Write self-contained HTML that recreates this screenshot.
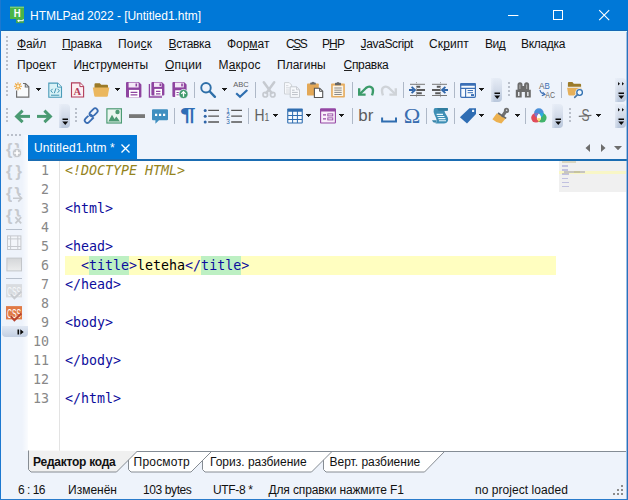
<!DOCTYPE html>
<html>
<head>
<meta charset="utf-8">
<title>HTMLPad 2022 - [Untitled1.htm]</title>
<style>
html,body{margin:0;padding:0;}
body{width:628px;height:500px;overflow:hidden;background:#eef3fb;font-family:"Liberation Sans",sans-serif;font-size:12px;color:#000;position:relative;}
.abs{position:absolute;}
svg{position:absolute;overflow:visible;}
#bl{position:absolute;left:0;top:0;width:1px;height:500px;background:#1c78d0;}
#br{position:absolute;left:627px;top:31px;width:1px;height:469px;background:#2b72bc;}
#br2{position:absolute;left:626px;top:32px;width:1px;height:467px;background:rgba(60,130,200,.45);}
#bb{position:absolute;left:0;top:499px;width:628px;height:1px;background:#2a7bcb;}
#title{position:absolute;left:0;top:0;width:628px;height:31px;background:#0078d7;}
#title .edge{position:absolute;left:0;top:30px;width:628px;height:1px;background:#1668b4;}
#hl{position:absolute;left:1px;top:31px;width:626px;height:1px;background:#e4fbff;}
#title .t{position:absolute;left:30px;top:9px;letter-spacing:-0.035px;color:#fff;font-size:12px;line-height:15px;white-space:nowrap;}
.mi{position:absolute;white-space:nowrap;line-height:15px;height:15px;font-size:12px;color:#111;}
.mi u{text-decoration:none;position:relative;}
.mi u::after{content:'';position:absolute;left:0;right:0;top:12px;height:1px;background:#222;}
.grip{position:absolute;width:2px;}
.grip i{display:block;width:2px;height:2px;background:#b9bfca;margin-bottom:2px;}
.hgrip{position:absolute;height:2px;white-space:nowrap;font-size:0;}
.hgrip i{display:inline-block;width:2px;height:2px;background:#b9bfca;margin-right:2px;}
.sep{position:absolute;width:1px;height:16px;background:#aeb8c7;}
.ovf{position:absolute;width:11px;height:24px;background:linear-gradient(90deg,rgba(238,243,251,.55),rgba(238,243,251,0) 30%),linear-gradient(#e6ecf6,#d4dcea 45%,#b9c7dc);border-radius:0 4px 4px 0;}
#tabline{position:absolute;left:28px;top:159px;width:599px;height:2px;background:#1a6cb2;}
#tab{position:absolute;left:28px;top:135px;width:109px;height:26px;background:#0078d7;color:#fff;}
#tab .t{position:absolute;left:6px;top:6px;letter-spacing:0.14px;font-size:12px;line-height:15px;white-space:nowrap;color:#fff;}
#editor{position:absolute;left:28px;top:161px;width:598px;height:290px;background:#fff;overflow:hidden;}
#gl{position:absolute;left:31px;top:0;width:1px;height:290px;background:#e3e3e3;}
.code{font-family:"DejaVu Sans Mono","Liberation Mono",monospace;font-size:13.3px;line-height:19px;white-space:pre;height:19px;}
.ln{position:absolute;left:0;width:21px;text-align:right;color:#888;}
.cl{position:absolute;left:37px;color:#000;}
.tg{color:#0c0c9c;}
.dt{color:#94831c;font-style:italic;}
#cur{position:absolute;left:37px;top:95px;width:491px;height:19px;background:#fffec0;}
.gh{position:absolute;top:95px;width:40px;height:19px;background:#bdf0c3;}
#mm{position:absolute;left:531px;top:0;width:67px;height:31px;background:#f0f0f0;}
#mm i{position:absolute;height:1.6px;display:block;opacity:.26;}
.st{position:absolute;top:483px;line-height:15px;font-size:12px;white-space:nowrap;color:#111;}
.bt{position:absolute;top:455px;line-height:15px;font-size:12px;white-space:nowrap;color:#111;}

</style>
</head>
<body>
<div id="title">
<svg style="left:9px;top:7px" width="16" height="17" viewBox="0 0 16 17"><path d="M1 -0.3H15V16.1H7V12H1Z" fill="#4ab548"/><path d="M1 -0.3H15V0.8H1Z" fill="#86d481"/><path d="M7 12H15V16.1H7Z" fill="#3fa654"/><text x="4.7" y="9.9" font-family="Liberation Sans, sans-serif" font-weight="bold" font-size="11" fill="#fff" textLength="6.9" lengthAdjust="spacingAndGlyphs">H</text><path d="M9.2 13.7H14.2V12.2" stroke="#fff" stroke-width="1" fill="none"/><path d="M8 13.7L10.2 12.2V15.2Z" fill="#fff"/></svg>
<div class="t">HTMLPad 2022 - [Untitled1.htm]</div>
<svg style="left:500px;top:0" width="128" height="31" viewBox="0 0 128 31"><path d="M8 15.5h10.4" stroke="#fff" stroke-width="1"/><rect x="53.5" y="10.5" width="9" height="9" fill="none" stroke="#fff" stroke-width="1"/><path d="M99.2 10.1l10 10M109.2 10.1l-10 10" stroke="#fff" stroke-width="1.1"/></svg>
<div class="edge"></div>
</div>
<div id="hl"></div>
<div class="grip" style="left:6px;top:36px"><i></i><i></i><i></i><i></i><i></i><i></i><i></i><i></i><i></i></div>
<div class="mi" style="left:17px;top:37px;letter-spacing:-0.1px"><u>Ф</u>айл</div>
<div class="mi" style="left:62px;top:37px;letter-spacing:-0.1px"><u>П</u>равка</div>
<div class="mi" style="left:118px;top:37px;letter-spacing:0.2px">Пои<u>с</u>к</div>
<div class="mi" style="left:168.5px;top:37px;letter-spacing:-0.37px"><u>В</u>ставка</div>
<div class="mi" style="left:227px;top:37px;letter-spacing:-0.05px">Фор<u>м</u>ат</div>
<div class="mi" style="left:286px;top:37px;letter-spacing:-1.5px">C<u>S</u>S</div>
<div class="mi" style="left:322px;top:37px;letter-spacing:-0.9px">P<u>H</u>P</div>
<div class="mi" style="left:360.5px;top:37px;letter-spacing:-0.35px"><u>J</u>avaScript</div>
<div class="mi" style="left:429px;top:37px;letter-spacing:0.1px">Ск<u>р</u>ипт</div>
<div class="mi" style="left:485px;top:37px;letter-spacing:-0.5px">Ви<u>д</u></div>
<div class="mi" style="left:521px;top:37px;letter-spacing:-0.3px">Вкладка</div>
<div class="mi" style="left:17px;top:58px;letter-spacing:0px">Про<u>е</u>кт</div>
<div class="mi" style="left:73.5px;top:58px;letter-spacing:-0.03px">И<u>н</u>струменты</div>
<div class="mi" style="left:165px;top:58px;letter-spacing:0.15px"><u>О</u>пции</div>
<div class="mi" style="left:218.5px;top:58px;letter-spacing:0.1px">М<u>а</u>крос</div>
<div class="mi" style="left:277px;top:58px;letter-spacing:0px">Плагины</div>
<div class="mi" style="left:343.5px;top:58px;letter-spacing:-0.3px"><u>С</u>правка</div>
<div class="grip" style="left:6px;top:82px"><i></i><i></i><i></i><i></i></div>
<svg style="left:14px;top:82px" width="16" height="16" viewBox="0 0 16 16"><path d="M2.6 8.5V15.2H14.8V4.8L11.5 1.5H9" fill="#f9fbfd" stroke="#6f6f6f" stroke-width="1.2"/><path d="M11.3 1.6V5H14.7" fill="none" stroke="#6f6f6f" stroke-width="1.1"/><path d="M4 0.3V8.3M0 4.3H8M1.2 1.5L6.8 7.1M6.8 1.5L1.2 7.1" stroke="#f0a63a" stroke-width="1.1" fill="none"/><circle cx="4" cy="4.3" r="1.2" fill="#fff3d0"/></svg>
<svg style="left:36px;top:88px" width="5" height="3" viewBox="0 0 5 3" shape-rendering="crispEdges"><path d="M0 0h5v1h-1v1h-1v1h-1v-1h-1v-1h-1z" fill="#1b1b1b"/></svg>
<svg style="left:47px;top:82px" width="16" height="16" viewBox="0 0 16 16"><path d="M1.8 1.1H10.6L14.5 5V15.2H1.8Z" fill="#d9f2f7" stroke="#4a9bb8" stroke-width="1.1"/><path d="M10.5 1.2V5.1H14.4" fill="#f4fcfe" stroke="#4a9bb8" stroke-width="1"/><path d="M5.6 6.8L3.8 8.8L5.6 10.8M10.6 6.8L12.4 8.8L10.6 10.8M9 6.3L7.3 11.2M4 13.2H12.3" fill="none" stroke="#3f93b0" stroke-width="1"/></svg>
<svg style="left:70px;top:82px" width="16" height="16" viewBox="0 0 16 16"><path d="M1.5 0.9H10L13.6 4.5V15H1.5Z" fill="#fbeff2" stroke="#b23c5a" stroke-width="1.1"/><path d="M9.9 1V4.6H13.5" fill="#fff" stroke="#b23c5a" stroke-width="1"/><text x="7.3" y="13.2" text-anchor="middle" font-family="Liberation Serif, serif" font-size="10.5" font-weight="bold" fill="#b23c5a">A</text></svg>
<svg style="left:93px;top:82px" width="16" height="16" viewBox="0 0 16 16"><path d="M1.5 2.2Q1.5 1.2 2.5 1.2H6.8L8.2 2.7H14Q15 2.7 15 3.7V6H1.5Z" fill="#9b7a28"/><path d="M-0.2 5.5H16.3L14.8 14Q14.6 14.8 13.8 14.8H2.3Q1.5 14.8 1.3 14Z" fill="#ebb75e"/></svg>
<svg style="left:115px;top:88px" width="5" height="3" viewBox="0 0 5 3" shape-rendering="crispEdges"><path d="M0 0h5v1h-1v1h-1v1h-1v-1h-1v-1h-1z" fill="#1b1b1b"/></svg>
<svg style="left:126px;top:82px" width="16" height="16" viewBox="0 0 16 16"><path d="M0 1Q0 0 1 0H12.8L15.4 2.6V14.4Q15.4 15.4 14.4 15.4H1Q0 15.4 0 14.4Z" fill="#8e44a0"/><rect x="2.6" y="0.6" width="10.0" height="4.9" fill="#f4e8f7"/><rect x="9.5" y="1.5" width="1.6" height="2.9" fill="#8e44a0"/><rect x="3" y="7.9" width="10.0" height="7.5" fill="#fff"/><path d="M4.6 10.4H11.4M4.6 12.9H11.4" stroke="#8e44a0" stroke-width="1.1"/></svg>
<svg style="left:149px;top:82px" width="16" height="16" viewBox="0 0 16 16"><path d="M2.4 1Q2.4 0 3.4 0H12.8L15.4 2.6V12.5Q15.4 13.5 14.4 13.5H3.4Q2.4 13.5 2.4 12.5Z" fill="#8e44a0"/><rect x="5.0" y="0.6" width="7.6" height="4.3" fill="#f4e8f7"/><rect x="10.5" y="1.5" width="1.6" height="2.6" fill="#8e44a0"/><rect x="5.4" y="6.9" width="7.6" height="6.6" fill="#fff"/><path d="M7.0 9.4H11.4M7.0 11.9H11.4" stroke="#8e44a0" stroke-width="1.1"/><path d="M0.4 2V15H13" fill="none" stroke="#8e44a0" stroke-width="1.3"/></svg>
<svg style="left:172px;top:82px" width="16" height="16" viewBox="0 0 16 16"><path d="M0.4 1Q0.4 0 1.4 0H12.0L14.6 2.6V14Q14.6 15 13.6 15H1.4Q0.4 15 0.4 14Z" fill="#8e44a0"/><rect x="3.0" y="0.6" width="8.8" height="4.8" fill="#f4e8f7"/><rect x="9.2" y="1.5" width="1.6" height="2.9" fill="#8e44a0"/><rect x="3.2" y="8.3" width="5" height="6.7" fill="#fff"/><path d="M4.5 10.5H7M4.5 12.8H7" stroke="#8e44a0" stroke-width="1"/><circle cx="11.5" cy="12" r="4.6" fill="#3f9a6c" stroke="#eef3fb" stroke-width="0.8"/><path d="M11.5 14.8V9.8M9.3 11.9L11.5 9.6L13.7 11.9" fill="none" stroke="#fff" stroke-width="1.3"/></svg>
<div class="sep" style="left:194px;top:82px"></div>
<svg style="left:200px;top:82px" width="16" height="16" viewBox="0 0 16 16"><circle cx="6" cy="5.7" r="4.75" fill="none" stroke="#2f6fa8" stroke-width="1.9"/><path d="M9.8 9.5L14.9 14.8" stroke="#2f6fa8" stroke-width="2.4" stroke-linecap="round"/></svg>
<svg style="left:222px;top:88px" width="5" height="3" viewBox="0 0 5 3" shape-rendering="crispEdges"><path d="M0 0h5v1h-1v1h-1v1h-1v-1h-1v-1h-1z" fill="#1b1b1b"/></svg>
<svg style="left:233px;top:82px" width="16" height="16" viewBox="0 0 16 16"><text x="0.2" y="5.3" font-family="Liberation Sans, sans-serif" font-size="7.3" fill="#5f5f5f" textLength="15.6" lengthAdjust="spacingAndGlyphs">ABC</text><path d="M3.2 11.2L7 14.8L14.3 8" fill="none" stroke="#2f6fb0" stroke-width="2.2"/></svg>
<div class="sep" style="left:255px;top:82px"></div>
<svg style="left:262px;top:82px" width="16" height="16" viewBox="0 0 16 16"><path d="M1.8 0.3L9.6 11M12.2 0.3L4.4 11" stroke="#c6cad0" stroke-width="2.5" fill="none" stroke-linecap="round"/><circle cx="3.3" cy="12.7" r="2.3" fill="none" stroke="#c6cad0" stroke-width="1.7"/><circle cx="10.7" cy="12.7" r="2.3" fill="none" stroke="#c6cad0" stroke-width="1.7"/></svg>
<svg style="left:284px;top:82px" width="16" height="16" viewBox="0 0 16 16"><path d="M0.5 0.6H5.2L7.6 3V12H0.5Z" fill="#f7f9fc" stroke="#cdd1d6" stroke-width="1"/><path d="M2 3.6H4.4M2 5.8H5.6M2 8H5.6M2 10H5.6" stroke="#d2d5da" stroke-width="0.9"/><path d="M6.2 4.8H12.6L15.5 7.7V15.4H6.2Z" fill="#f7f9fc" stroke="#c6cad0" stroke-width="1"/><path d="M12.5 4.9V7.8H15.4" fill="none" stroke="#c6cad0" stroke-width="0.9"/><path d="M8 8.2H10.6M8 10.4H13.8M8 12.6H13.8" stroke="#bcc1c8" stroke-width="1"/></svg>
<svg style="left:307px;top:82px" width="16" height="16" viewBox="0 0 16 16"><rect x="0" y="1.4" width="11.8" height="12.2" rx="0.8" fill="#e3a857"/><path d="M3.2 2.6V1.2Q3.2 0.6 4 0.6H4.8Q5.2 -0.2 6 -0.2Q6.8 -0.2 7.2 0.6H8Q8.8 0.6 8.8 1.2V2.6Z" fill="#6a6a6a"/><path d="M7.4 6.2H12.7L15.7 9.2V15.5H7.4Z" fill="#fff" stroke="#555" stroke-width="1.1"/><path d="M12.6 6.3V9.3H15.6" fill="none" stroke="#555" stroke-width="1"/></svg>
<svg style="left:330px;top:82px" width="16" height="16" viewBox="0 0 16 16"><rect x="1.1" y="1.5" width="13.8" height="14" rx="0.8" fill="#e6ae62"/><rect x="2.8" y="3.6" width="10.4" height="10.4" fill="#fcf4e6"/><path d="M5 3.2V1.4Q5 0.8 5.8 0.8H6.8Q7.2 0 8 0Q8.8 0 9.2 0.8H10.2Q11 0.8 11 1.4V3.2Z" fill="#666"/><path d="M4.3 6H11.7M4.3 8.2H11.7M4.3 10.4H11.7M4.3 12.5H11.7" stroke="#8a8a8a" stroke-width="1"/></svg>
<div class="sep" style="left:352px;top:82px"></div>
<svg style="left:358px;top:82px" width="16" height="16" viewBox="0 0 16 16"><path d="M1.2 6.2V12.6H7.6" fill="none" stroke="#3c9b6a" stroke-width="2.4"/><path d="M1.8 12L8 6C10.6 3.6 15 4.4 15 8.4C15 10.2 14.6 11.8 14 13.4" fill="none" stroke="#3c9b6a" stroke-width="2.4"/></svg>
<svg style="left:381px;top:82px" width="16" height="16" viewBox="0 0 16 16"><g transform="translate(16 0) scale(-1 1)"><path d="M1.2 6.2V12.6H7.6" fill="none" stroke="#cfd3d8" stroke-width="2.4"/><path d="M1.8 12L8 6C10.6 3.6 15 4.4 15 8.4C15 10.2 14.6 11.8 14 13.4" fill="none" stroke="#cfd3d8" stroke-width="2.4"/></g></svg>
<div class="sep" style="left:403px;top:82px"></div>
<svg style="left:409px;top:82px" width="16" height="16" viewBox="0 0 16 16"><path d="M7.5 0V15.5" stroke="#9a9a9a" stroke-width="0.8" stroke-dasharray="1.2 0.8"/><path d="M1 2.3H16M1 13.5H16" stroke="#777" stroke-width="1"/><path d="M7.6 4.8H11.2M7.6 8H16M7.6 11.2H12.8" stroke="#5a5a5a" stroke-width="2"/><path d="M0 8H4.5" stroke="#2f65a8" stroke-width="2"/><path d="M2.6 4.8L6 8L2.6 11.2" fill="none" stroke="#2f65a8" stroke-width="1.8"/></svg>
<svg style="left:432px;top:82px" width="16" height="16" viewBox="0 0 16 16"><path d="M8.5 0V15.5" stroke="#9a9a9a" stroke-width="0.8" stroke-dasharray="1.2 0.8"/><path d="M0 2.3H15M0 13.5H15" stroke="#777" stroke-width="1"/><path d="M4.8 4.8H8.4M0 8H8.4M3.2 11.2H8.4" stroke="#5a5a5a" stroke-width="2"/><path d="M11.5 8H16" stroke="#2f65a8" stroke-width="2"/><path d="M13.4 4.8L10 8L13.4 11.2" fill="none" stroke="#2f65a8" stroke-width="1.8"/></svg>
<div class="sep" style="left:454px;top:82px"></div>
<svg style="left:460px;top:82px" width="16" height="16" viewBox="0 0 16 16"><rect x="0.7" y="1.6" width="14.7" height="13.7" rx="1" fill="#f6fafe" stroke="#3b6fb5" stroke-width="1.2"/><path d="M0.1 2.4Q0.1 1 1.5 1H14.6Q16 1 16 2.4V3.7H0.1Z" fill="#3b6fb5"/><path d="M0.8 6.4H15.3M5.6 6.4V15" stroke="#3b6fb5" stroke-width="1.1"/><path d="M7.6 8.5H13M7.6 10.7H13" stroke="#3b6fb5" stroke-width="1"/><rect x="11" y="12.1" width="3" height="2" fill="#3b6fb5"/></svg>
<svg style="left:479px;top:88px" width="5" height="3" viewBox="0 0 5 3" shape-rendering="crispEdges"><path d="M0 0h5v1h-1v1h-1v1h-1v-1h-1v-1h-1z" fill="#1b1b1b"/></svg>
<div class="ovf" style="left:491.4px;top:78px"><svg style="left:0;top:0" width="11" height="24" viewBox="0 0 11 24"><path d="M3.5 14.5h5.5v1.5h-5.5zM3.3 17.5h5.9l-2.95 3.6z" fill="#0a0a0a"/></svg></div>
<div class="grip" style="left:508px;top:82px"><i></i><i></i><i></i><i></i></div>
<svg style="left:515px;top:82px" width="16" height="16" viewBox="0 0 16 16"><path d="M2.5 8V2.8Q2.5 0.3 5 0.3Q7.5 0.3 7.5 2.8V8Z M9.1 8V2.8Q9.1 0.3 11.6 0.3Q14.1 0.3 14.1 2.8V8Z" fill="#6b6b6b"/><path d="M0.8 7.7H6.7V15.6H0.8ZM9.9 7.7H15.8V15.6H9.9ZM6.5 4H10.1V10H6.5Z" fill="#6b6b6b"/><path d="M3 10H4.5V14H3ZM12.1 10H13.6V14H12.1Z" fill="#e4e6ea"/><path d="M4.4 2.6H5.4V7H4.4ZM11.2 2.6H12.2V7H11.2Z" fill="#b4b4b4"/></svg>
<svg style="left:539px;top:82px" width="16" height="16" viewBox="0 0 16 16"><text x="0" y="6.6" font-family="Liberation Sans, sans-serif" font-size="8.6" fill="#666" textLength="5.6" lengthAdjust="spacingAndGlyphs">A</text><text x="5.4" y="6.6" font-family="Liberation Sans, sans-serif" font-size="8.6" fill="#3a6db3" textLength="5.3" lengthAdjust="spacingAndGlyphs">B</text><text x="6.2" y="15.6" font-family="Liberation Sans, sans-serif" font-size="8.8" fill="#666" textLength="9.8" lengthAdjust="spacingAndGlyphs">AC</text><path d="M1 8Q1.4 11 5.3 12.4" fill="none" stroke="#3a6db3" stroke-width="1.2"/><path d="M3.6 10L6 12.6L2.8 13.8" fill="none" stroke="#3a6db3" stroke-width="1.1"/></svg>
<div class="sep" style="left:561px;top:82px"></div>
<svg style="left:567px;top:82px" width="16" height="16" viewBox="0 0 16 16"><path d="M0.9 1Q0.9 0 1.9 0H5.4L6.8 1.7H13.1Q14.1 1.7 14.1 2.7V4.7H0.9Z" fill="#9b7a28"/><path d="M0.1 5.7H14.5L13.2 12.8Q13 13.6 12.2 13.6H2.3Q1.5 13.6 1.3 12.8Z" fill="#e6b05a"/><circle cx="12.6" cy="10.5" r="4.3" fill="#eef3fb"/><path d="M10.6 12.4L7.2 15.8" stroke="#eef3fb" stroke-width="3.2" stroke-linecap="round"/><circle cx="12.6" cy="10.5" r="2.8" fill="#f4faff" stroke="#2f6fb0" stroke-width="1.3"/><path d="M10.5 12.6L7.7 15.4" stroke="#4a78a8" stroke-width="1.6" stroke-linecap="round"/></svg>
<div class="ovf" style="left:615px;top:78px"><svg style="left:0;top:0" width="11" height="24" viewBox="0 0 11 24"><path d="M3 4l2 1.75l-2 1.75zM7 4l2 1.75l-2 1.75z" fill="#111"/><path d="M3.5 14.5h5.5v1.5h-5.5zM3.3 17.5h5.9l-2.95 3.6z" fill="#0a0a0a"/></svg></div>
<div class="grip" style="left:6px;top:108px"><i></i><i></i><i></i><i></i></div>
<svg style="left:14px;top:108px" width="16" height="16" viewBox="0 0 16 16"><path d="M2.6 8.4H16" stroke="#4a9a72" stroke-width="3"/><path d="M8.6 2.6L2.6 8.4L8.6 14.2" fill="none" stroke="#4a9a72" stroke-width="3"/></svg>
<svg style="left:37px;top:108px" width="16" height="16" viewBox="0 0 16 16"><path d="M0 8.4H13.4" stroke="#4a9a72" stroke-width="3"/><path d="M7.4 2.6L13.4 8.4L7.4 14.2" fill="none" stroke="#4a9a72" stroke-width="3"/></svg>
<div class="ovf" style="left:58.7px;top:104px"><svg style="left:0;top:0" width="11" height="24" viewBox="0 0 11 24"><path d="M3.5 14.5h5.5v1.5h-5.5zM3.3 17.5h5.9l-2.95 3.6z" fill="#0a0a0a"/></svg></div>
<div class="grip" style="left:75px;top:108px"><i></i><i></i><i></i><i></i></div>
<svg style="left:83px;top:108px" width="16" height="16" viewBox="0 0 16 16"><g transform="translate(8.2 7.6) rotate(-45)" fill="none" stroke="#3a6db3" stroke-width="1.8"><rect x="-8.7" y="-1.9" width="9.3" height="5" rx="2.5"/><path d="M-2.4 -3.1H1.2" stroke="#eef3fb" stroke-width="2.8"/><rect x="-0.6" y="-3.1" width="9.3" height="5" rx="2.5"/><path d="M-1.3 3.1H1.8" stroke="#eef3fb" stroke-width="1.2"/><path d="M-1.8 3.1H0.5" stroke="#3a6db3" stroke-width="1.8"/></g></svg>
<svg style="left:106px;top:108px" width="16" height="16" viewBox="0 0 16 16"><rect x="0.9" y="0.8" width="14.5" height="14.2" fill="#eaf6f0" stroke="#4c9a73" stroke-width="1.2"/><circle cx="11.5" cy="4" r="2.2" fill="#4c9a73"/><path d="M2.3 13.5L6 6.8L8.5 11L10.3 8.6L14 13.5Z" fill="#4c9a73"/></svg>
<svg style="left:129px;top:108px" width="16" height="16" viewBox="0 0 16 16"><rect x="0" y="6.2" width="16" height="3.8" fill="#777"/></svg>
<svg style="left:152px;top:108px" width="16" height="16" viewBox="0 0 16 16"><path d="M1 1.2H15Q16 1.2 16 2.2V11.2Q16 12.2 15 12.2H7L3.4 15.8V12.2H1Q0 12.2 0 11.2V2.2Q0 1.2 1 1.2Z" fill="#3f8fc0"/><path d="M3 5.8H5.2V8H3ZM7 5.8H9.2V8H7ZM11 5.8H13.2V8H11Z" fill="#fff"/></svg>
<div class="sep" style="left:174px;top:108px"></div>
<svg style="left:180px;top:108px" width="16" height="16" viewBox="0 0 16 16"><text x="-0.1" y="13.1" font-family="Liberation Sans, sans-serif" font-size="18" font-weight="bold" fill="#2f6db5" textLength="15.8" lengthAdjust="spacingAndGlyphs">¶</text></svg>
<svg style="left:203px;top:108px" width="16" height="16" viewBox="0 0 16 16"><circle cx="2.2" cy="2.4" r="1.5" fill="#2f65a8"/><circle cx="2.2" cy="8.2" r="1.5" fill="#2f65a8"/><circle cx="2.2" cy="14" r="1.5" fill="#2f65a8"/><path d="M5.2 2.4H16M5.2 8.2H16M5.2 14H16" stroke="#555" stroke-width="1.3"/></svg>
<svg style="left:226px;top:108px" width="16" height="16" viewBox="0 0 16 16"><text x="0.3" y="4.6" font-family="Liberation Sans, sans-serif" font-size="6.4" fill="#2f65a8">1</text><text x="0.3" y="10.4" font-family="Liberation Sans, sans-serif" font-size="6.4" fill="#2f65a8">2</text><text x="0.3" y="16.2" font-family="Liberation Sans, sans-serif" font-size="6.4" fill="#2f65a8">3</text><path d="M5.2 2.4H16M5.2 8.2H16M5.2 14H16" stroke="#555" stroke-width="1.3"/></svg>
<div class="sep" style="left:248px;top:108px"></div>
<svg style="left:254px;top:108px" width="16" height="16" viewBox="0 0 16 16"><text x="0.4" y="13.2" font-family="Liberation Sans, sans-serif" font-size="16" fill="#5f5f5f" textLength="10" lengthAdjust="spacingAndGlyphs">H</text><text x="10.6" y="13.3" font-family="Liberation Sans, sans-serif" font-size="10.4" fill="#5f5f5f" textLength="4.8" lengthAdjust="spacingAndGlyphs">1</text></svg>
<svg style="left:273px;top:114px" width="5" height="3" viewBox="0 0 5 3" shape-rendering="crispEdges"><path d="M0 0h5v1h-1v1h-1v1h-1v-1h-1v-1h-1z" fill="#1b1b1b"/></svg>
<svg style="left:287px;top:108px" width="16" height="16" viewBox="0 0 16 16"><rect x="0.2" y="0.4" width="15.6" height="15" rx="0.8" fill="#2f6db0"/><path d="M1.3 3.8H5.1V7H1.3ZM6.1 3.8H9.9V7H6.1ZM10.9 3.8H14.7V7H10.9ZM1.3 8H5.1V11H1.3ZM6.1 8H9.9V11H6.1ZM10.9 8H14.7V11H10.9ZM1.3 12H5.1V14.4H1.3ZM6.1 12H9.9V14.4H6.1ZM10.9 12H14.7V14.4H10.9Z" fill="#f6fafe"/></svg>
<svg style="left:306px;top:114px" width="5" height="3" viewBox="0 0 5 3" shape-rendering="crispEdges"><path d="M0 0h5v1h-1v1h-1v1h-1v-1h-1v-1h-1z" fill="#1b1b1b"/></svg>
<svg style="left:320px;top:108px" width="16" height="16" viewBox="0 0 16 16"><rect x="0.6" y="1" width="14.8" height="14" rx="0.6" fill="#f9effb" stroke="#9447a4" stroke-width="1.1"/><path d="M0 1.4Q0 0.4 1 0.4H15Q16 0.4 16 1.4V3.6H0Z" fill="#9447a4"/><path d="M3 6.9H6M3 10.9H6" stroke="#9447a4" stroke-width="1.1"/><rect x="7.8" y="5.9" width="5" height="2" fill="#fff" stroke="#9447a4" stroke-width="0.9"/><rect x="7.8" y="9.9" width="5" height="2" fill="#fff" stroke="#9447a4" stroke-width="0.9"/></svg>
<svg style="left:339px;top:114px" width="5" height="3" viewBox="0 0 5 3" shape-rendering="crispEdges"><path d="M0 0h5v1h-1v1h-1v1h-1v-1h-1v-1h-1z" fill="#1b1b1b"/></svg>
<div class="sep" style="left:352px;top:108px"></div>
<svg style="left:358px;top:108px" width="16" height="16" viewBox="0 0 16 16"><text x="0.3" y="13.1" font-family="Liberation Sans, sans-serif" font-size="17" fill="#5c5c5c" textLength="15" lengthAdjust="spacingAndGlyphs">br</text></svg>
<svg style="left:381px;top:108px" width="16" height="16" viewBox="0 0 16 16"><path d="M1.1 9.4V13.4H15V9.4" fill="none" stroke="#2f6db0" stroke-width="2"/></svg>
<svg style="left:404px;top:108px" width="16" height="16" viewBox="0 0 16 16"><text x="-0.3" y="15" font-family="Liberation Serif, serif" font-size="22" fill="#3a6eb0" textLength="16.6" lengthAdjust="spacingAndGlyphs">Ω</text></svg>
<div class="sep" style="left:426px;top:108px"></div>
<svg style="left:432px;top:108px" width="16" height="16" viewBox="0 0 16 16"><path d="M1.8 1.2Q2.2 0.1 3.6 0.1H15Q16 0.1 16 1.4Q16 2.7 15 2.7H12.4Q12.8 5 14.8 7.8Q17 11 15.6 13.6Q14.6 15.6 12 15.6H3.4Q5.2 14.6 4.6 12Q4 9.6 2.6 7Q1 4 1.8 1.2Z" fill="#3f8fb5"/><path d="M5.2 0.1H15Q16 0.1 16 1.4Q16 2.7 15 2.7H6.6Q5.4 1.6 5.2 0.1Z" fill="#317d9f"/><path d="M0 12.2H4.5Q4.9 14.6 3.6 14.7Q0.8 14.8 0 12.2Z" fill="#3a86aa"/><path d="M4.6 6.4H11M5.4 8.5H12.4M6.4 10.6H13.4M7 12.7H14" stroke="#e8f8fd" stroke-width="1.1"/></svg>
<div class="sep" style="left:454px;top:108px"></div>
<svg style="left:460px;top:108px" width="16" height="16" viewBox="0 0 16 16"><path d="M-0.1 9.3L9.4 0.3H16V6L7 15.6Z" fill="#2f6db3"/><rect x="12" y="1.8" width="2.2" height="2.2" rx="0.6" fill="#f3f8fd"/></svg>
<svg style="left:479px;top:114px" width="5" height="3" viewBox="0 0 5 3" shape-rendering="crispEdges"><path d="M0 0h5v1h-1v1h-1v1h-1v-1h-1v-1h-1z" fill="#1b1b1b"/></svg>
<svg style="left:493px;top:108px" width="16" height="16" viewBox="0 0 16 16"><path d="M3.8 5.2L12.8 10.2L8.4 15.6Q3.4 15 -0.6 11.2Z" fill="#ecb150"/><path d="M13 3L9.8 7.6" stroke="#707070" stroke-width="3.2" stroke-linecap="round"/><circle cx="13.5" cy="2.4" r="2.6" fill="#707070"/><circle cx="13.6" cy="2.2" r="0.75" fill="#dfe2e7"/><path d="M5 5L13.2 10.3" stroke="#666" stroke-width="1.6"/></svg>
<svg style="left:515px;top:114px" width="5" height="3" viewBox="0 0 5 3" shape-rendering="crispEdges"><path d="M0 0h5v1h-1v1h-1v1h-1v-1h-1v-1h-1z" fill="#1b1b1b"/></svg>
<div class="sep" style="left:525px;top:108px"></div>
<svg style="left:531px;top:108px" width="16" height="16" viewBox="0 0 16 16"><defs><clipPath id="cb"><circle cx="7.9" cy="5.1" r="4.8"/></clipPath><clipPath id="cr"><circle cx="5" cy="9.8" r="4.8"/></clipPath><clipPath id="cg"><circle cx="10.8" cy="9.8" r="4.8"/></clipPath></defs><circle cx="7.9" cy="5.1" r="4.8" fill="#4a8fd8"/><circle cx="5" cy="9.8" r="4.8" fill="#e14b5a"/><circle cx="10.8" cy="9.8" r="4.8" fill="#41b36b"/><circle cx="5" cy="9.8" r="4.8" fill="#7a78cf" clip-path="url(#cb)"/><circle cx="10.8" cy="9.8" r="4.8" fill="#2baee0" clip-path="url(#cb)"/><circle cx="10.8" cy="9.8" r="4.8" fill="#f7b648" clip-path="url(#cr)"/><g clip-path="url(#cb)"><g clip-path="url(#cr)"><circle cx="10.8" cy="9.8" r="4.8" fill="#fffdf2"/></g></g><path d="M7.9 5.4Q10.4 8.4 10 10.2Q9.6 12 7.9 12.6Q6.2 12 5.8 10.2Q5.4 8.4 7.9 5.4Z" fill="#fffdf4"/><path d="M6 10.6Q7.9 9.6 9.8 10.6Q9.6 12.4 7.9 13.4Q6.2 12.4 6 10.6Z" fill="#fbd778"/></svg>
<div class="ovf" style="left:552px;top:104px"><svg style="left:0;top:0" width="11" height="24" viewBox="0 0 11 24"><path d="M3.5 14.5h5.5v1.5h-5.5zM3.3 17.5h5.9l-2.95 3.6z" fill="#0a0a0a"/></svg></div>
<div class="grip" style="left:569px;top:108px"><i></i><i></i><i></i><i></i></div>
<svg style="left:578px;top:108px" width="16" height="16" viewBox="0 0 16 16"><text x="3.4" y="13.4" font-family="Liberation Sans, sans-serif" font-size="16" fill="#6a6a6a" textLength="8" lengthAdjust="spacingAndGlyphs">S</text><path d="M0.8 8.3L13.4 7.3" stroke="#6a6a6a" stroke-width="1.2"/></svg>
<svg style="left:596px;top:114px" width="5" height="3" viewBox="0 0 5 3" shape-rendering="crispEdges"><path d="M0 0h5v1h-1v1h-1v1h-1v-1h-1v-1h-1z" fill="#1b1b1b"/></svg>
<div class="ovf" style="left:615px;top:104px"><svg style="left:0;top:0" width="11" height="24" viewBox="0 0 11 24"><path d="M3 4l2 1.75l-2 1.75zM7 4l2 1.75l-2 1.75z" fill="#111"/><path d="M3.5 14.5h5.5v1.5h-5.5zM3.3 17.5h5.9l-2.95 3.6z" fill="#0a0a0a"/></svg></div>
<div class="abs" style="left:22px;top:135px;width:6px;height:316px;background:linear-gradient(90deg,rgba(255,255,255,0),rgba(255,255,255,.7))"></div>
<div class="hgrip" style="left:7px;top:134px"><i></i><i></i><i></i><i></i></div>
<svg style="left:6px;top:142px" width="16" height="16" viewBox="0 0 16 16"><text x="0" y="13" font-family="Liberation Sans, sans-serif" font-size="16.5" font-weight="bold" fill="#c6c9ce">{</text><text x="8.6" y="13" font-family="Liberation Sans, sans-serif" font-size="16.5" font-weight="bold" fill="#c6c9ce">}</text><circle cx="11" cy="11" r="4.8" fill="#c6c9ce" stroke="#eef3fb" stroke-width="1"/><path d="M11 8.2V13.8M8.2 11H13.8" stroke="#fff" stroke-width="1.7"/></svg>
<svg style="left:6px;top:164px" width="16" height="16" viewBox="0 0 16 16"><text x="0" y="13" font-family="Liberation Sans, sans-serif" font-size="16.5" font-weight="bold" fill="#c6c9ce">{</text><text x="9.6" y="13" font-family="Liberation Sans, sans-serif" font-size="16.5" font-weight="bold" fill="#c6c9ce">}</text></svg>
<svg style="left:6px;top:186px" width="16" height="16" viewBox="0 0 16 16"><text x="0" y="13" font-family="Liberation Sans, sans-serif" font-size="16.5" font-weight="bold" fill="#c6c9ce">{</text><text x="8.6" y="13" font-family="Liberation Sans, sans-serif" font-size="16.5" font-weight="bold" fill="#c6c9ce">}</text><rect x="6" y="9" width="11" height="7" fill="#eef3fb"/><path d="M7 12.2H15.4M12.2 8.8L15.6 12.2L12.2 15.6" fill="none" stroke="#c6c9ce" stroke-width="1.6"/></svg>
<svg style="left:6px;top:208px" width="16" height="16" viewBox="0 0 16 16"><text x="0" y="13" font-family="Liberation Sans, sans-serif" font-size="16.5" font-weight="bold" fill="#c6c9ce">{</text><text x="8.6" y="13" font-family="Liberation Sans, sans-serif" font-size="16.5" font-weight="bold" fill="#c6c9ce">}</text><rect x="8" y="8.6" width="9" height="8" fill="#eef3fb"/><path d="M9.4 9.2L15.2 15.4M15.2 9.2L9.4 15.4" stroke="#c6c9ce" stroke-width="1.7"/></svg>
<div class="abs" style="left:6px;top:229px;width:16px;height:1px;background:#b8c0cc"></div>
<svg style="left:6px;top:235px" width="16" height="16" viewBox="0 0 16 16"><rect x="1.5" y="0.9" width="13.4" height="13.6" fill="#f3f6fa" stroke="#c6c9ce" stroke-width="1"/><path d="M4.6 0.9V14.5M11.8 0.9V14.5M1.5 3.9H14.9M1.5 11.5H14.9" stroke="#c6c9ce" stroke-width="1"/></svg>
<svg style="left:6px;top:257px" width="16" height="16" viewBox="0 0 16 16"><defs><linearGradient id="gq" x1="0" y1="0" x2="0" y2="1"><stop offset="0" stop-color="#d4d6d9"/><stop offset="1" stop-color="#eceded"/></linearGradient></defs><rect x="0.9" y="1.1" width="14.6" height="12.8" fill="url(#gq)" stroke="#c3c6ca" stroke-width="1"/></svg>
<div class="abs" style="left:6px;top:278px;width:16px;height:1px;background:#b8c0cc"></div>
<svg style="left:6px;top:284px" width="16" height="16" viewBox="0 0 16 16"><rect x="0" y="0.1" width="16" height="13.3" fill="#d9dce0"/><text x="1" y="11.8" font-family="Liberation Sans, sans-serif" font-size="13.6" fill="#f6f8fb" textLength="14" lengthAdjust="spacingAndGlyphs">CSS</text><path d="M4.7 10.2L8.4 14.4L15.3 7.5" fill="none" stroke="#c8cbd0" stroke-width="2"/></svg>
<svg style="left:6px;top:306px" width="16" height="16" viewBox="0 0 16 16"><rect x="0" y="0.1" width="16" height="13.3" fill="#e07a46"/><text x="1" y="11.8" font-family="Liberation Sans, sans-serif" font-size="13.6" fill="#fff" textLength="14" lengthAdjust="spacingAndGlyphs">CSS</text><path d="M4.7 10.2L8.4 14.4L15.3 7.5" fill="none" stroke="#b8432f" stroke-width="2"/></svg>
<div class="abs" style="left:2px;top:326px;width:26px;height:11px;border-radius:0 0 4px 4px;background:linear-gradient(#e1e8f3,#c3cfe2)"><svg style="left:15px;top:3px" width="8" height="6" viewBox="0 0 8 6"><path d="M0.5 0.5h1.6v5h-1.6zM3.3 0.3l3.4 2.7l-3.4 2.7z" fill="#0a0a0a"/></svg></div>
<div id="tab"><div class="t">Untitled1.htm *</div><svg style="left:93.4px;top:8.6px" width="9" height="9" viewBox="0 0 9 9"><path d="M0.5 0.5l8 8M8.5 0.5l-8 8" stroke="#fff" stroke-width="1.3"/></svg></div>
<div id="tabline"></div>
<svg style="left:584px;top:143px" width="40" height="10" viewBox="0 0 40 10"><path d="M6 1v8l-4.5-4zM17 1v8l4.5-4zM30 3h8l-4 4.2z" fill="#6d6d6d"/></svg>
<div id="editor">
<div id="gl"></div>
<div id="cur"></div><div class="gh" style="left:61px"></div><div class="gh" style="left:173px"></div>
<div class="code ln" style="top:0px">1</div><div class="code cl" style="top:0px"><span class="dt">&lt;!DOCTYPE HTML&gt;</span></div>
<div class="code ln" style="top:19px">2</div>
<div class="code ln" style="top:38px">3</div><div class="code cl" style="top:38px"><span class="tg">&lt;html&gt;</span></div>
<div class="code ln" style="top:57px">4</div>
<div class="code ln" style="top:76px">5</div><div class="code cl" style="top:76px"><span class="tg">&lt;head&gt;</span></div>
<div class="code ln" style="top:95px">6</div><div class="code cl" style="top:95px">  <span class="tg">&lt;title&gt;</span>leteha<span class="tg">&lt;/title&gt;</span></div>
<div class="code ln" style="top:114px">7</div><div class="code cl" style="top:114px"><span class="tg">&lt;/head&gt;</span></div>
<div class="code ln" style="top:133px">8</div>
<div class="code ln" style="top:152px">9</div><div class="code cl" style="top:152px"><span class="tg">&lt;body&gt;</span></div>
<div class="code ln" style="top:171px">10</div>
<div class="code ln" style="top:190px">11</div><div class="code cl" style="top:190px"><span class="tg">&lt;/body&gt;</span></div>
<div class="code ln" style="top:209px">12</div>
<div class="code ln" style="top:228px">13</div><div class="code cl" style="top:228px"><span class="tg">&lt;/html&gt;</span></div>
<div id="mm"><div class="abs" style="left:0;top:10px;width:67px;height:3px;background:#f8f6c6"></div><i style="left:2.5px;top:0.2px;width:14px;background:#9a8c3a"></i><i style="left:2.5px;top:4.3px;width:6px;background:#3a3ab0"></i><i style="left:2.5px;top:8.4px;width:6px;background:#3a3ab0"></i><i style="left:5px;top:10.4px;width:10px;background:#3a3ab0"></i><i style="left:15px;top:10.4px;width:6px;background:#333"></i><i style="left:21px;top:10.4px;width:5px;background:#3a3ab0"></i><i style="left:2.5px;top:12.4px;width:7px;background:#3a3ab0"></i><i style="left:2.5px;top:16.5px;width:6px;background:#3a3ab0"></i><i style="left:2.5px;top:20.6px;width:7px;background:#3a3ab0"></i><i style="left:2.5px;top:24.7px;width:7px;background:#3a3ab0"></i></div>
</div>
<svg style="left:0;top:445px" width="628" height="32" viewBox="0 0 628 32">
<path d="M626 6.5H444.5L424.5 27H326.5L323.5 24.5V6.5" fill="#fff" stroke="none"/>
<path d="M323.5 6.5H444.5L424.5 27H326L323.5 24.5Z" fill="#fff" stroke="#868c93" stroke-width="1"/>
<path d="M202.5 6.5H332L311.5 27H205L202.5 24.5Z" fill="#fff" stroke="#868c93" stroke-width="1"/>
<path d="M128.5 6.5H211.5L191 27H131L128.5 24.5Z" fill="#fff" stroke="#868c93" stroke-width="1"/>
<path d="M137 6.5H626" stroke="#848c95" stroke-width="1" fill="none"/>
<path d="M28.5 5.5V24.5L31 27H116.5L137.5 6" fill="#f0f0f0" stroke="none"/>
<path d="M28.5 5.5V24.5L31 27H116.5L137.5 6" fill="none" stroke="#868c93" stroke-width="1"/>
</svg>
<div class="bt" style="left:33px;font-weight:bold;letter-spacing:-0.25px">Редактор кода</div>
<div class="bt" style="left:133.6px;letter-spacing:0.2px">Просмотр</div>
<div class="bt" style="left:210px">Гориз. разбиение</div>
<div class="bt" style="left:329.5px">Верт. разбиение</div>
<div class="st" style="left:18px;letter-spacing:-0.5px">6 : 16</div>
<div class="st" style="left:68px;letter-spacing:0px">Изменён</div>
<div class="st" style="left:143px;letter-spacing:-0.4px">103 bytes</div>
<div class="st" style="left:213px;letter-spacing:-0.35px">UTF-8 *</div>
<div class="st" style="left:268.5px;letter-spacing:-0.13px">Для справки нажмите F1</div>
<div class="st" style="left:475px;letter-spacing:0.05px">no project loaded</div>
<svg style="left:613px;top:485px" width="10" height="10" viewBox="0 0 10 10" shape-rendering="crispEdges"><path d="M8 0h2v2h-2zM4 4h2v2h-2zM8 4h2v2h-2zM0 8h2v2h-2zM4 8h2v2h-2zM8 8h2v2h-2z" fill="#8c8c8c"/></svg>
<div id="bl"></div><div id="br2"></div><div id="br"></div><div id="bb"></div>
</body>
</html>
